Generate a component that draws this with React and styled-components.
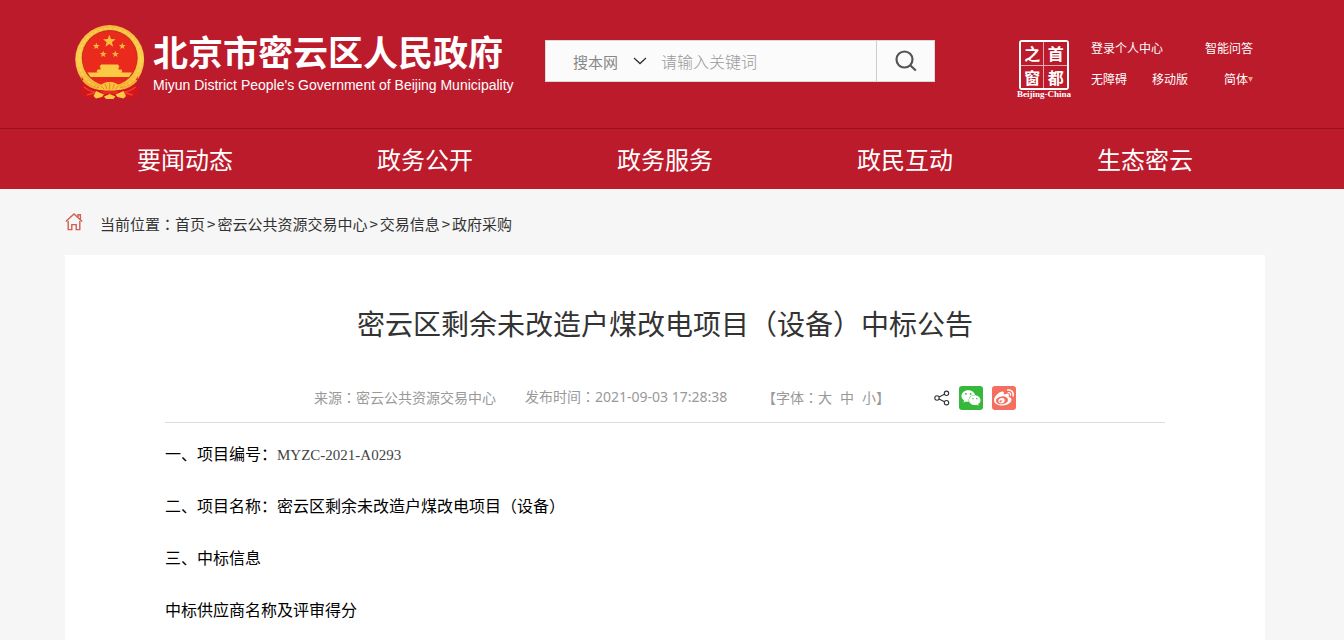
import React from 'react';
import styled, { createGlobalStyle } from 'styled-components';
import { FaWeixin, FaWeibo } from 'react-icons/fa';

const navItems = ['要闻动态', '政务公开', '政务服务', '政民互动', '生态密云'];
const crumbs = ['首页', '密云公共资源交易中心', '交易信息', '政府采购'];
const fontSizes = ['大', '中', '小'];

const star = (cx, cy, r) =>
  Array.from({ length: 10 }, (_, i) => {
    const radius = i % 2 ? r * 0.42 : r;
    const angle = (Math.PI / 5) * i - Math.PI / 2;
    return `${cx + radius * Math.cos(angle)},${cy + radius * Math.sin(angle)}`;
  }).join(' ');

function Emblem() {
  return (
    <EmblemSvg viewBox="5 5 70 75" aria-hidden="true">
      <defs>
        <linearGradient id="gold" x1="0" y1="0" x2="0" y2="1">
          <stop offset="0" stopColor="#f6b93a" />
          <stop offset="0.5" stopColor="#fbd04c" />
          <stop offset="1" stopColor="#f5a92c" />
        </linearGradient>
      </defs>
      <circle cx="39.7" cy="39.5" r="34.4" fill="url(#gold)" />
      <circle cx="39.7" cy="39.5" r="31" fill="none" stroke="#fddc6a" strokeWidth="2" strokeDasharray="3 2" opacity="0.5" />
      <circle cx="39.7" cy="38" r="28" fill="#c8321c" />
      <circle cx="39.7" cy="38.2" r="27" fill="#ea2a1c" />
      <polygon points={star(39.3, 21.3, 6.6)} fill="#f9bd3c" />
      <polygon points={star(26.3, 26.2, 3.6)} fill="#f9b53c" />
      <polygon points={star(52.3, 26.2, 3.6)} fill="#f9b53c" />
      <polygon points={star(33.2, 34.2, 3.6)} fill="#f9b53c" />
      <polygon points={star(45.4, 34.2, 3.6)} fill="#f9b53c" />
      <path
        d="M31 44.5h17l1.5 2.5-1 .5v2h3l1 3h-2v3h-22v-3h-2l1-3h3v-2l-1-.5z"
        fill="#fcc945"
      />
      <path d="M17.500 52.500h44.500l-3 4.500H20.500z" fill="#fcc945" />
      <path d="M21 58h37.500l-4 3H25z" fill="#e5271b" />
      <path d="M11.500 56c3 7 9 10 16 11.500h24.500c7-1.500 13-4.500 16-11.500l-1 9 2 8-4 4-10 1.500H24.500L14.500 77l-4-4 2-8z" fill="#d3151c" />
      <path d="M13 60c4 5 9 8 17 9M66.500 60c-4 5-9 8-17 9" fill="none" stroke="#f3b035" strokeWidth="2.200" />
      <path d="M14 67c4 3 7 5 11 5M65.500 67c-4 3-7 5-11 5M17 75l7-2M62.500 75l-7-2" fill="none" stroke="#f0452c" strokeWidth="1.500" />
      <path d="M28 69.500c2-5 6-7.500 11.700-7.500s9.700 2.500 11.700 7.500l-6 1-5.700 3-5.700-3z" fill="#fac03c" />
      <path d="M34 69l-3-3M37 69l-2-5M39.700 69.500V63M42.500 69l2-5M45.500 69l3-3" stroke="#de7a22" strokeWidth="0.800" />
      <path d="M30 70.500h19.500l-4 4-5.700-1.500-5.700 1.500z" fill="#e4301f" />
      <path d="M26 71l8 3.500-2 2.500-6 1.500-2.500-2.500zM53.500 71l-8 3.500 2 2.500 6 1.500 2.500-2.500z" fill="#fcc945" />
      <path d="M34 76.500l5.700-2.500 5.700 2.500-2 2.500h-7.400z" fill="#fcc945" />
    </EmblemSvg>
  );
}

function HomeIcon() {
  return (
    <svg width="18" height="18" viewBox="0 0 18 18" fill="none" stroke="#cf5f4f" strokeWidth="1.400" aria-hidden="true">
      <path d="M.8 8.600L9 1l8.200 7.600" />
      <path d="M13 4V1.800h2.400V6.500" />
      <path d="M3.200 8v8.600h3.600v-5h4.400v5h3.600V8" />
    </svg>
  );
}

function ShareIcon() {
  return (
    <svg width="16" height="16" viewBox="0 0 16 16" fill="none" stroke="#333" strokeWidth="1.100" aria-hidden="true">
      <circle cx="3" cy="8" r="2.200" />
      <circle cx="12.500" cy="3.300" r="2.200" />
      <circle cx="12.500" cy="12.700" r="2.200" />
      <path d="M5 7l5.500-2.700M5 9l5.500 2.700" />
    </svg>
  );
}

function Header() {
  return (
    <Top>
      <Container>
        <Banner>
          <Brand href="#">
            <Emblem />
            <div>
              <BrandName>北京市密云区人民政府</BrandName>
              <BrandSub>Miyun District People's Government of Beijing Municipality</BrandSub>
            </div>
          </Brand>
          <Search onSubmit={(e) => e.preventDefault()}>
            <Scope>
              <select aria-label="搜索范围">
                <option>搜本网</option>
              </select>
              <svg width="14" height="8" viewBox="0 0 14 8" fill="none" stroke="#333" strokeWidth="1.300" aria-hidden="true">
                <path d="M1 1l6 5.500L13 1" />
              </svg>
            </Scope>
            <input type="text" placeholder="请输入关键词" aria-label="请输入关键词" />
            <button type="submit" aria-label="搜索">
              <svg width="22" height="22" viewBox="0 0 22 22" fill="none" stroke="#555" strokeWidth="2.200" aria-hidden="true">
                <circle cx="9.500" cy="9.500" r="8" />
                <path d="M15.200 15.200l5.600 5.300" />
              </svg>
            </button>
          </Search>
          <Tools>
            <Seal href="#">
              <SealGrid>
                <span>之</span>
                <span>首</span>
                <span>窗</span>
                <span>都</span>
              </SealGrid>
              <SealCaption>Beijing-China</SealCaption>
            </Seal>
            <ToolLinks>
              <ToolRow>
                <a href="#">登录个人中心</a>
                <a href="#">智能问答</a>
              </ToolRow>
              <ToolRow>
                <a href="#">无障碍</a>
                <a href="#">移动版</a>
                <a href="#">
                  简体
                  <Caret width="5" height="5" viewBox="0 0 5 5" aria-hidden="true">
                    <path d="M0 0h5L2.500 5z" />
                  </Caret>
                </a>
              </ToolRow>
            </ToolLinks>
          </Tools>
        </Banner>
      </Container>
      <Nav>
        <Container>
          <NavList>
            {navItems.map((item) => (
              <li key={item}>
                <a href="#">{item}</a>
              </li>
            ))}
          </NavList>
        </Container>
      </Nav>
    </Top>
  );
}

function App() {
  return (
    <>
      <GlobalStyle />
      <Page>
        <Header />
        <Main>
          <Breadcrumb>
            <HomeIcon />
            <p>
              当前位置<Colon>：</Colon>
              {crumbs.map((crumb, i) => (
                <React.Fragment key={crumb}>
                  {i > 0 && <Arrow>&gt;</Arrow>}
                  <a href="#">{crumb}</a>
                </React.Fragment>
              ))}
            </p>
          </Breadcrumb>
          <Article>
            <Title>密云区剩余未改造户煤改电项目（设备）中标公告</Title>
            <Meta>
              <span>
                来源<Colon>：</Colon>密云公共资源交易中心
              </span>
              <Published>
                发布时间<Colon>：</Colon>
                <time>2021-09-03 17:28:38</time>
              </Published>
              <FontPicker>
                【字体<Colon>：</Colon>
                <Sizes>
                  {fontSizes.map((size) => (
                    <button type="button" key={size}>
                      {size}
                    </button>
                  ))}
                </Sizes>
                】
              </FontPicker>
              <Share>
                <ShareIcon />
                <ShareButton type="button" aria-label="微信" $color="#36b83b">
                  <FaWeixin />
                </ShareButton>
                <ShareButton type="button" aria-label="微博" $color="#f56f61">
                  <FaWeibo />
                </ShareButton>
              </Share>
            </Meta>
            <Content>
              <p>
                一、项目编号：<Code>MYZC-2021-A0293</Code>
              </p>
              <p>二、项目名称：密云区剩余未改造户煤改电项目（设备）</p>
              <p>三、中标信息</p>
              <p>中标供应商名称及评审得分</p>
            </Content>
          </Article>
        </Main>
      </Page>
    </>
  );
}

export default App;

const GlobalStyle = createGlobalStyle`
  * {
    box-sizing: border-box;
    margin: 0;
    padding: 0;
  }
  body {
    background: #f6f6f6;
    color: #333;
    font-family: 'Noto Sans CJK SC', sans-serif;
  }
  a {
    color: inherit;
    text-decoration: none;
  }
  button,
  input,
  select {
    border: 0;
    background: none;
    color: inherit;
    font: inherit;
  }
  button {
    cursor: pointer;
  }
  svg {
    display: block;
    flex-shrink: 0;
  }
`;

const Page = styled.div`
  min-height: 100vh;
  display: flex;
  flex-direction: column;
`;

const Container = styled.div`
  max-width: 1214px;
  margin: 0 auto;
  padding-right: 14px;
`;

const Top = styled.header`
  background: #bc1b2c;
  color: #fff;
`;

const Banner = styled.div`
  height: 128px;
  padding: 25px 12px 0 10px;
  display: flex;
  align-items: flex-start;
`;

const Brand = styled.a`
  width: 470px;
  display: flex;
  gap: 8px;
`;

const EmblemSvg = styled.svg`
  width: 70px;
  height: 75px;
`;

const BrandName = styled.h1`
  margin-top: 4px;
  font-size: 35px;
  font-weight: 700;
  line-height: 44px;
  white-space: nowrap;
`;

const BrandSub = styled.p`
  margin-top: 2px;
  font-family: 'Liberation Sans', sans-serif;
  font-size: 14px;
  line-height: 20px;
  white-space: nowrap;
`;

const Search = styled.form`
  width: 390px;
  height: 42px;
  margin-top: 15px;
  display: flex;
  background: #fbfbfb;
  border: 1px solid #d9d9d9;
  input {
    flex: 1;
    min-width: 0;
    font-size: 16px;
    color: #333;
    outline: none;
  }
  input::placeholder {
    color: #999;
    font-weight: 300;
  }
  button {
    width: 58px;
    display: flex;
    align-items: center;
    justify-content: center;
    border-left: 1px solid #ccc;
  }
`;

const Scope = styled.label`
  width: 115px;
  padding-left: 27px;
  display: flex;
  align-items: center;
  gap: 13px;
  color: #888;
  font-size: 15px;
  select {
    width: 47px;
    appearance: none;
    outline: none;
  }
`;

const Tools = styled.div`
  margin: 15px 0 0 auto;
  display: flex;
  gap: 20px;
`;

const Seal = styled.a`
  display: flex;
  flex-direction: column;
  align-items: center;
`;

const SealGrid = styled.span`
  width: 50px;
  height: 50px;
  display: grid;
  grid-template-columns: 1fr 1fr;
  gap: 1px;
  border: 2px solid #fff;
  border-radius: 3px;
  background: #e9a7ae;
  span {
    display: flex;
    align-items: center;
    justify-content: center;
    background: #bc1b2c;
    font-size: 16px;
    font-weight: 700;
    line-height: 22px;
  }
`;

const SealCaption = styled.span`
  font: 700 9px/8px 'Liberation Serif', serif;
`;

const ToolLinks = styled.div`
  width: 162px;
  font-size: 12px;
`;

const ToolRow = styled.div`
  height: 31px;
  line-height: 16px;
  display: flex;
  gap: 25px;
  a {
    display: flex;
  }
  a:last-child {
    margin-left: auto;
  }
`;

const Caret = styled.svg`
  margin-top: 6px;
  fill: #e8a07c;
`;

const Nav = styled.nav`
  border-top: 1px solid #9d0f1f;
`;

const NavList = styled.ul`
  display: flex;
  list-style: none;
  li {
    flex: 1;
    text-align: center;
    font-size: 24px;
    line-height: 60px;
  }
`;

const Main = styled(Container)`
  width: 100%;
  flex: 1;
  display: flex;
  flex-direction: column;
`;

const Breadcrumb = styled.div`
  height: 66px;
  display: flex;
  align-items: center;
  gap: 17px;
  font-size: 15px;
  line-height: 24px;
  p {
    padding-top: 4px;
  }
`;

const Arrow = styled.span`
  padding: 0 2px;
`;

/* the TC face centres full-width colons */
const Colon = styled.span`
  font-family: 'Noto Sans CJK TC', sans-serif;
`;

const Article = styled.article`
  flex: 1;
  padding: 48px 100px 0;
  background: #fff;
`;

const Title = styled.h2`
  font-size: 28px;
  font-weight: 400;
  line-height: 40px;
  text-align: center;
`;

const Meta = styled.div`
  height: 80px;
  padding-top: 28px;
  display: flex;
  align-items: center;
  justify-content: center;
  gap: 29px;
  border-bottom: 1px solid #ddd;
  color: #999;
  font-size: 14px;
  line-height: 20px;
  time {
    font-family: 'Noto Sans', sans-serif;
  }
`;

const Published = styled.span`
  min-width: 208px;
`;

const FontPicker = styled.span`
  display: flex;
`;

const Sizes = styled.span`
  display: flex;
  gap: 8px;
`;

const Share = styled.div`
  margin-left: 15px;
  padding-top: 3px;
  display: flex;
  align-items: center;
  gap: 9px;
`;

const ShareButton = styled.button`
  width: 24px;
  height: 24px;
  display: flex;
  align-items: center;
  justify-content: center;
  border-radius: 3px;
  background: ${({ $color }) => $color};
  color: #fff;
  font-size: 20px;
`;

const Content = styled.div`
  padding-top: 14px;
  color: #000;
  font-size: 16px;
  line-height: 32px;
  p + p {
    margin-top: 20px;
  }
`;

const Code = styled.span`
  color: #444;
  font-family: 'Liberation Serif', serif;
  font-size: 15px;
  line-height: 16px;
`;
